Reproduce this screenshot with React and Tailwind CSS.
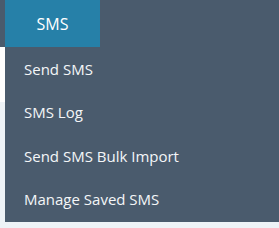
const items = ['Send SMS', 'SMS Log', 'Send SMS Bulk Import', 'Manage Saved SMS']

export default function App() {
  return (
    <div className="w-[279px] h-[228px] bg-[#eef3f7] overflow-hidden" style={{ fontFamily: '"Open Sans", "Noto Sans", sans-serif' }}>
      <div className="h-[47px] bg-[#4a5b6d] pl-[5px] flex">
        <div className="w-[95px] bg-[#2680a8] flex items-center justify-center text-white text-[16px] font-medium">SMS</div>
      </div>
      <div className="flex">
        <div className="w-[5px] flex flex-col">
          <div className="h-[55px] bg-white" />
        </div>
        <ul className="flex-1 bg-[#4a5b6d] h-[175px]">
          {items.map(label => (
            <li key={label} className="h-[43.5px] flex items-center pl-[19px] text-[15px] font-medium text-[#f4f6f8]">
              {label}
            </li>
          ))}
        </ul>
      </div>
    </div>
  )
}
